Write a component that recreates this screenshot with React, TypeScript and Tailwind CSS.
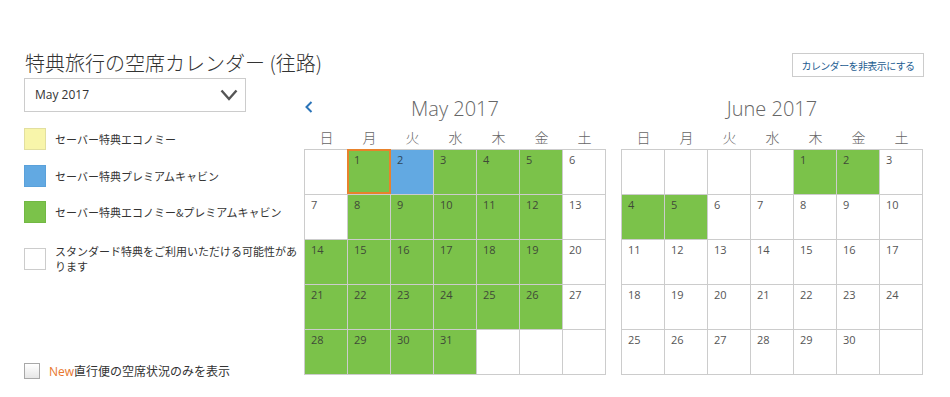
import React from "react";

type Cell = { d: number | null; c: "g" | "b" | "w"; sel?: boolean };

const GREEN = "bg-[#7bc24a]";
const BLUE = "bg-[#62a9e2]";

function buildMay(): Cell[] {
  const green = new Set([1, 3, 4, 5, 8, 9, 10, 11, 12, 14, 15, 16, 17, 18, 19, 21, 22, 23, 24, 25, 26, 28, 29, 30, 31]);
  const cells: Cell[] = [{ d: null, c: "w" }];
  for (let i = 1; i <= 31; i++) {
    cells.push({ d: i, c: i === 2 ? "b" : green.has(i) ? "g" : "w", sel: i === 1 });
  }
  while (cells.length < 35) cells.push({ d: null, c: "w" });
  return cells;
}

function buildJune(): Cell[] {
  const green = new Set([1, 2, 4, 5]);
  const cells: Cell[] = [];
  for (let i = 0; i < 4; i++) cells.push({ d: null, c: "w" });
  for (let i = 1; i <= 30; i++) cells.push({ d: i, c: green.has(i) ? "g" : "w" });
  while (cells.length < 35) cells.push({ d: null, c: "w" });
  return cells;
}

const WEEK = ["日", "月", "火", "水", "木", "金", "土"];

function Calendar({ title, cells, prev }: { title: string; cells: Cell[]; prev?: boolean }) {
  return (
    <div className="flex w-[302px] flex-col">
      <div className="relative flex h-[30px] items-center justify-center">
        {prev && (
          <svg className="absolute left-[1px] top-[7px]" width="8" height="12" viewBox="0 0 8 12">
            <polyline points="6.5,1 1.5,6 6.5,11" fill="none" stroke="#2b74b8" strokeWidth="2" />
          </svg>
        )}
        <span className="font-['Open_Sans'] text-[20px] font-light leading-none text-[#666]">{title}</span>
      </div>
      <div className="flex h-[25px] items-center pl-[1px]">
        {WEEK.map((w) => (
          <div
            key={w}
            className="w-[43px] text-center font-['Noto_Sans_CJK_JP',sans-serif] text-[14px] font-light leading-none text-[#666]"
          >
            {w}
          </div>
        ))}
      </div>
      <div className="grid grid-cols-[repeat(7,43px)] border-l border-t border-[#cccccc]">
        {cells.map((c, i) => (
          <div
            key={i}
            className={`relative h-[45px] border-b border-r border-[#cccccc] pl-[6px] pt-[4px] font-['Open_Sans'] text-[11px] leading-none ${
              c.c === "g" ? `${GREEN} text-[#3f4a38]` : c.c === "b" ? `${BLUE} text-[#2f4659]` : "bg-white text-[#555]"
            }`}
          >
            {c.d}
            {c.sel && (
              <div className="absolute -left-px -top-px h-[45px] w-[44px] border-2 border-[#e8822c]" />
            )}
          </div>
        ))}
      </div>
    </div>
  );
}

function Legend({ color, children }: { color: string; children: React.ReactNode }) {
  return (
    <div className="flex items-center">
      <div className={`h-[22px] w-[22px] shrink-0 border ${color}`} />
      <div className="ml-[9px] w-[246px] font-['Noto_Sans_CJK_JP',sans-serif] text-[11px] leading-[15px] text-[#333]">
        {children}
      </div>
    </div>
  );
}

export default function App() {
  return (
    <div className="flex h-[397px] w-[950px] bg-white pt-[49px] font-['Noto_Sans_CJK_JP',sans-serif]">
      <div className="ml-[24px] flex w-[280px] flex-col pb-[18px]">
        <div className="ml-[1px] h-[28px] whitespace-nowrap text-[20px] font-light leading-[28px] text-[#333]">
          特典旅行の空席カレンダー (往路)
        </div>
        <div className="mt-[1px] flex h-[34px] w-[222px] items-center justify-between border border-[#cccccc] pl-[10px] pr-[7px]">
          <span className="font-['Open_Sans'] text-[12px] text-[#333]">May 2017</span>
          <svg width="18" height="12" viewBox="0 0 18 12">
            <polyline points="1.5,1.5 9,10 16.5,1.5" fill="none" stroke="#555" strokeWidth="2.4" />
          </svg>
        </div>
        <div className="mt-[16px] flex flex-col">
          <Legend color="border-[#e2df9f] bg-[#f8f5aa]">セーバー特典エコノミー</Legend>
          <div className="h-[15px]" />
          <Legend color="border-[#5aa1da] bg-[#62a9e2]">セーバー特典プレミアムキャビン</Legend>
          <div className="h-[14px]" />
          <Legend color="border-[#72b843] bg-[#7bc24a]">セーバー特典エコノミー&amp;プレミアムキャビン</Legend>
          <div className="h-[21px]" />
          <Legend color="border-[#cccccc] bg-white">スタンダード特典をご利用いただける可能性があります</Legend>
        </div>
        <div className="mt-auto flex items-center">
          <div className="h-[16px] w-[16px] border border-[#a8a8a8] bg-gradient-to-b from-white to-[#e6e6e6]" />
          <span className="ml-[9px] text-[12px] leading-none text-[#333]">
            <span className="font-['Open_Sans'] text-[#e8772e]">New</span>直行便の空席状況のみを表示
          </span>
        </div>
      </div>
      <div className="flex flex-1 flex-col">
        <div className="mr-[26px] mt-[4px] flex justify-end">
          <div className="flex h-[24px] w-[132px] items-center justify-center border border-[#cccccc] text-[10px] tracking-[-0.6px] text-[#1d5c91]">
            カレンダーを非表示にする
          </div>
        </div>
        <div className="mt-[17px] flex gap-[15px]">
          <Calendar title="May 2017" cells={buildMay()} prev />
          <Calendar title="June 2017" cells={buildJune()} />
        </div>
      </div>
    </div>
  );
}
